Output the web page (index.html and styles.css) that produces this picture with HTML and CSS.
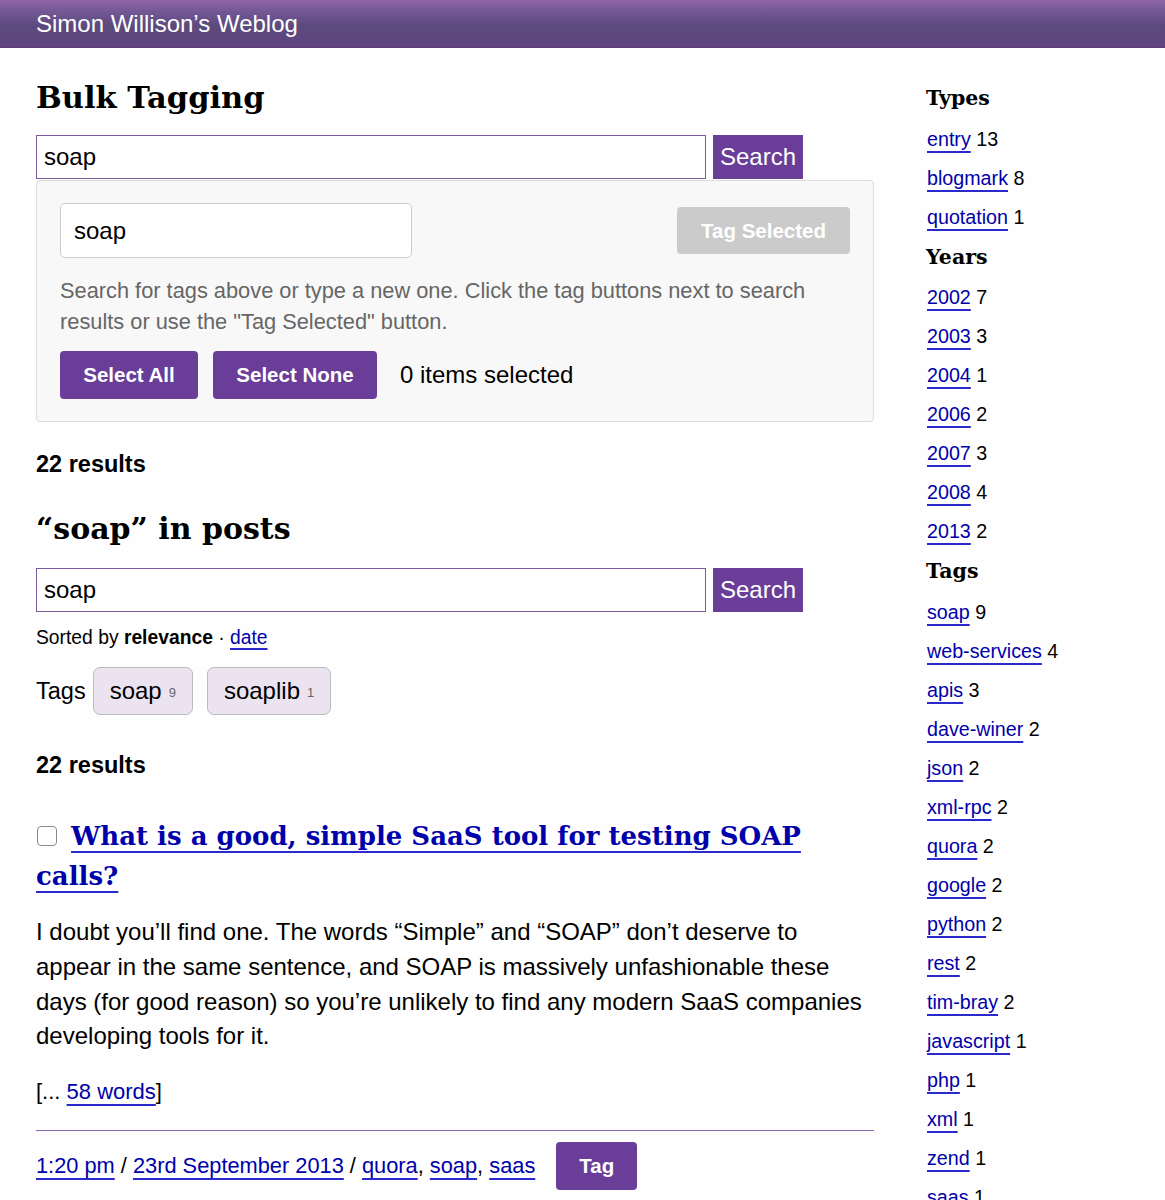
FILE: index.html
```html
<!DOCTYPE html>
<html lang="en">
<head>
<meta charset="utf-8">
<title>Bulk Tagging</title>
<link rel="stylesheet" href="styles.css">
</head>
<body>
<header class="site-header"><a class="site-title" href="#">Simon Willison’s Weblog</a></header>
<div class="page">
  <main class="main">
    <h1 class="page-title">Bulk Tagging</h1>
    <form class="search-form">
      <input class="search-input" type="text" value="soap">
      <button class="search-btn" type="button">Search</button>
    </form>
    <div class="bulk-panel">
      <div class="panel-top">
        <input class="tag-input" type="text" value="soap">
        <button class="btn btn-disabled" type="button">Tag Selected</button>
      </div>
      <p class="help">Search for tags above or type a new one. Click the tag buttons next to search results or use the "Tag Selected" button.</p>
      <div class="panel-actions">
        <button class="btn" type="button">Select All</button>
        <button class="btn" type="button">Select None</button>
        <span class="selected-count">0 items selected</span>
      </div>
    </div>
    <p class="result-count first-count">22 results</p>
    <h2 class="section-title">“soap” in posts</h2>
    <form class="search-form">
      <input class="search-input" type="text" value="soap">
      <button class="search-btn" type="button">Search</button>
    </form>
    <p class="sorted">Sorted by <strong>relevance</strong> · <a href="#">date</a></p>
    <div class="tag-row">
      <span class="tag-label">Tags</span>
      <a class="chip" href="#">soap <span class="chip-count">9</span></a>
      <a class="chip" href="#">soaplib <span class="chip-count">1</span></a>
    </div>
    <p class="result-count second-count">22 results</p>
    <div class="entry">
      <h3 class="entry-title"><input class="check" type="checkbox"> <a href="#">What is a good, simple SaaS tool for testing SOAP calls?</a></h3>
      <p class="entry-body">I doubt you’ll find one. The words “Simple” and “SOAP” don’t deserve to appear in the same sentence, and SOAP is massively unfashionable these days (for good reason) so you’re unlikely to find any modern SaaS companies developing tools for it.</p>
      <p class="entry-more">[... <a href="#">58 words</a>]</p>
      <div class="entry-meta">
        <span class="meta-links"><a href="#">1:20 pm</a> / <a href="#">23rd September 2013</a> / <a href="#">quora</a>, <a href="#">soap</a>, <a href="#">saas</a></span>
        <button class="btn tag-btn" type="button">Tag</button>
      </div>
    </div>
  </main>
  <aside class="sidebar">
    <h3 class="side-title">Types</h3>
    <ul class="facet">
      <li><a href="#">entry</a> 13</li>
      <li><a href="#">blogmark</a> 8</li>
      <li><a href="#">quotation</a> 1</li>
    </ul>
    <h3 class="side-title">Years</h3>
    <ul class="facet">
      <li><a href="#">2002</a> 7</li>
      <li><a href="#">2003</a> 3</li>
      <li><a href="#">2004</a> 1</li>
      <li><a href="#">2006</a> 2</li>
      <li><a href="#">2007</a> 3</li>
      <li><a href="#">2008</a> 4</li>
      <li><a href="#">2013</a> 2</li>
    </ul>
    <h3 class="side-title">Tags</h3>
    <ul class="facet">
      <li><a href="#">soap</a> 9</li>
      <li><a href="#">web-services</a> 4</li>
      <li><a href="#">apis</a> 3</li>
      <li><a href="#">dave-winer</a> 2</li>
      <li><a href="#">json</a> 2</li>
      <li><a href="#">xml-rpc</a> 2</li>
      <li><a href="#">quora</a> 2</li>
      <li><a href="#">google</a> 2</li>
      <li><a href="#">python</a> 2</li>
      <li><a href="#">rest</a> 2</li>
      <li><a href="#">tim-bray</a> 2</li>
      <li><a href="#">javascript</a> 1</li>
      <li><a href="#">php</a> 1</li>
      <li><a href="#">xml</a> 1</li>
      <li><a href="#">zend</a> 1</li>
      <li><a href="#">saas</a> 1</li>
    </ul>
  </aside>
</div>
</body>
</html>
```
FILE: styles.css
```css
* { box-sizing: border-box; }
body {
  margin: 0;
  background: #fefefe;
  color: #000;
  font-family: "Liberation Sans", Arial, sans-serif;
  font-size: 24px;
  line-height: 1.45;
}
a { color: #0000aa; text-decoration: underline; text-decoration-color: #2a2acc; text-underline-offset: 5px; text-decoration-thickness: 1.5px; }

.site-header {
  height: 48px;
  padding-left: 36px;
  background: linear-gradient(to bottom, #8d64a8 0%, #6f5592 30%, #5c4a7c 55%, #5e467f 90%, #65407f 100%);
  border-bottom: 1px solid #55406f;
}
.site-title {
  color: #fff;
  text-decoration: none;
  font-size: 24px;
  line-height: 48px;
}

.page {
  display: grid;
  grid-template-columns: 838px 1fr;
  column-gap: 52px;
  padding-left: 36px;
}

.page-title, .section-title, .entry-title, .side-title {
  font-family: "DejaVu Serif", Georgia, serif;
  font-weight: bold;
}
.page-title {
  font-size: 30.5px;
  margin: 29px 0 18px;
  line-height: 40px;
}

.search-form { display: flex; gap: 7px; }
.search-input {
  width: 670px;
  height: 44px;
  border: 1.5px solid #7d5a9e;
  padding: 0 7px;
  font: 24px "Liberation Sans", Arial, sans-serif;
  color: #000;
  background: #fff;
}
.search-btn {
  width: 90px;
  height: 44px;
  border: none;
  background: #693d98;
  color: #fff;
  font: 24px "Liberation Sans", Arial, sans-serif;
  padding: 0;
}

.bulk-panel {
  margin-top: 1px;
  background: #f8f8f8;
  border: 1px solid #dcdcdc;
  border-radius: 4px;
  padding: 22px 23px 22px;
  height: 242px;
}
.panel-top { display: flex; justify-content: space-between; align-items: center; }
.tag-input {
  width: 352px;
  height: 55px;
  border: 1px solid #ccc;
  border-radius: 5px;
  background: #fff;
  padding: 0 13px;
  font: 24px "Liberation Sans", Arial, sans-serif;
  color: #000;
}
.btn {
  border: none;
  border-radius: 4px;
  background: #693d98;
  color: #fff;
  font: bold 20.5px "Liberation Sans", Arial, sans-serif;
  height: 48px;
  padding: 0 22px;
}
.btn-disabled { background: #cbcbcb; width: 173px; height: 47px; margin-right: 0; }
.help {
  margin: 17px 0 14px;
  color: #666;
  font-size: 21.8px;
  line-height: 31px;
}
.panel-actions { display: flex; align-items: center; gap: 15px; }
.panel-actions .btn:first-child { width: 138px; }
.panel-actions .btn:nth-child(2) { width: 164px; }
.selected-count { margin-left: 8px; font-size: 24px; }

.result-count { font-weight: bold; font-size: 23.5px; margin: 0; }
.first-count { margin-top: 25px; }
.section-title { font-size: 30px; margin: 28px 0 20px; line-height: 1.3; }

.sorted { font-size: 19.3px; margin: 12px 0 15px; }
.sorted a { text-underline-offset: 4px; }

.tag-row { display: flex; align-items: center; gap: 14px; }
.tag-label { font-size: 23.5px; margin-right: -7px; }
.chip {
  display: inline-flex;
  align-items: center;
  height: 48px;
  padding: 0 16px;
  background: #ebe3ef;
  border: 1px solid #bbb;
  border-radius: 7px;
  color: #000;
  text-decoration: none;
  font-size: 24px;
  gap: 7px;
}
.chip-count { font-size: 13px; color: #666; padding-top: 5px; }
.second-count { margin-top: 33px; }

.entry-title { font-size: 26px; line-height: 40px; margin: 34px 0 19px; }
.entry-title a { text-underline-offset: 6px; text-decoration-thickness: 2px; }
.check {
  appearance: none;
  width: 20px;
  height: 20px;
  border: 1.5px solid #8a8a8a;
  border-radius: 4px;
  background: #fff;
  margin: 0 5px 0 1px;
  vertical-align: -1px;
}
.entry-body { margin: 0 0 22px; font-size: 24px; line-height: 34.7px; }
.entry-more { margin: 0 0 22px; font-size: 22px; }
.entry-meta {
  border-top: 1.5px solid #8a65b0;
  padding-top: 11px;
  display: flex;
  align-items: center;
  gap: 21px;
  font-size: 21.8px;
}
.tag-btn { width: 81px; }

.sidebar { padding-top: 37px; }
.side-title { font-size: 20.5px; margin: 0 0 8px; line-height: 1.3; }
.facet { list-style: none; margin: 0 0 7px; padding: 0 0 0 1px; font-size: 19.7px; }
.facet li { line-height: 39px; }
.facet a { text-underline-offset: 5px; }
```
